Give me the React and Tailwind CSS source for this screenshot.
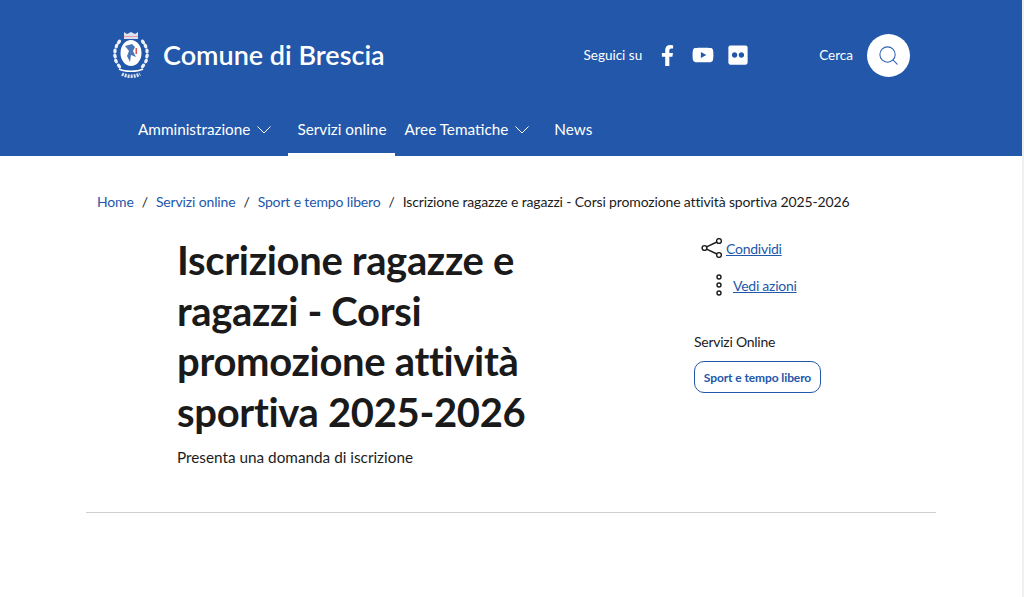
import React from 'react';
import { Search } from 'lucide-react';
import { FaFacebookF, FaYoutube, FaFlickr } from 'react-icons/fa';

// wreath leaves: x, y, rotation
const leaves = [
  [6, 11, 35], [3.5, 15, 20], [2, 20, 5], [2, 25, -10], [3, 30, -25], [6, 35, -40],
  [30, 11, -35], [32.5, 15, -20], [34, 20, -5], [34, 25, 10], [33, 30, 25], [30, 35, 40],
];

function Crest() {
  return (
    <svg width="36" height="47" viewBox="0 0 36 47" fill="none" className="mb-[2px]">
      {/* crown */}
      <path d="M11 1 L14 3 L18 1 L22 3 L25 1 V5 H11 Z" fill="#dbe3f0" />
      <rect x="11" y="5" width="14" height="1.2" fill="#ef9aa2" />
      <rect x="11" y="6.2" width="14" height="1.6" fill="#ffffff" />
      {/* wreath */}
      {leaves.map(([x, y, r]) => (
        <ellipse key={`${x}-${y}`} cx={x} cy={y} rx="1.7" ry="2.6" fill="#eef2f8" transform={`rotate(${r} ${x} ${y})`} />
      ))}
      {/* shield */}
      <ellipse cx="18" cy="22" rx="10.5" ry="13" fill="#ffffff" />
      <path d="M12 15 L19 13 L22 16 L20 20 L23 26 L18 24 L17 31 L14 25 L16 20 Z" fill="#4a76b8" />
      <rect x="22.5" y="17" width="1.5" height="6" fill="#d9525c" />
      {/* ribbon */}
      <path d="M6 38 C12 41 24 41 30 38" stroke="#ffffff" strokeWidth="1.6" />
      <path d="M9 43 C14 46 22 46 27 43" stroke="#dbe3f0" strokeWidth="3.5" strokeDasharray="2 1" />
    </svg>
  );
}

function Chevron() {
  return (
    <svg width="14" height="8" viewBox="0 0 14 8" fill="none" stroke="currentColor" strokeWidth="1">
      <path d="M0.5 0.5 L7 7 L13.5 0.5" />
    </svg>
  );
}

function NavItem({ label, chevron, active }) {
  return (
    <a className={`flex h-[46px] items-center gap-[7px] border-b-[3px] pb-[4px] pl-[9px] ${chevron ? 'pr-[16px]' : 'pr-[9px]'} ${active ? 'ml-[1px] border-white' : 'border-transparent'}`}>
      {label}
      {chevron && <Chevron />}
    </a>
  );
}

export default function App() {
  return (
    <div className="flex h-[597px] overflow-hidden bg-white font-['Lato',sans-serif]">
      <div className="min-w-0 flex-1">
        <header className="flex h-[156px] flex-col bg-[#2357aa] text-white">
          <div className="flex h-[110px] items-center pl-[113px] pr-[112px]">
            <Crest />
            <span className="ml-[14px] text-[27px] font-semibold">Comune di Brescia</span>
            <span className="ml-auto text-[13.5px]">Seguici su</span>
            <FaFacebookF className="ml-[15px]" size={21} />
            <FaYoutube className="ml-[14px]" size={22} />
            <FaFlickr className="ml-[12.5px]" size={22} />
            <span className="ml-[70.5px] text-[13.5px]">Cerca</span>
            <div className="ml-[14px] flex h-[43px] w-[43px] items-center justify-center rounded-full bg-white text-[#2f62b2]">
              <Search size={23} strokeWidth={1.1} />
            </div>
          </div>
          <nav className="flex pl-[129px] text-[15.3px]">
            <NavItem label="Amministrazione" chevron />
            <NavItem label="Servizi online" active />
            <NavItem label="Aree Tematiche" chevron />
            <NavItem label="News" />
          </nav>
        </header>

        <main className="px-[86px]">
          <div className="flex items-center pl-[11px] pt-[37px] text-[14px] leading-[18px] tracking-[-0.145px] text-[#1c1c1c]">
            <a className="text-[#2357aa]">Home</a>
            <span className="mx-[8px]">/</span>
            <a className="text-[#2357aa]">Servizi online</a>
            <span className="mx-[8px]">/</span>
            <a className="text-[#2357aa]">Sport e tempo libero</a>
            <span className="mx-[8px]">/</span>
            <span>Iscrizione ragazze e ragazzi - Corsi promozione attività sportiva 2025-2026</span>
          </div>

          <div className="flex border-b border-[#d0d0d0] pb-[43px]">
            <div className="ml-[91px] w-[431px] pt-[24px]">
              <h1 className="text-[40px] font-bold leading-[50.5px] tracking-[-0.33px] text-[#1a1a1a]">
                Iscrizione ragazze e ragazzi - Corsi promozione attività sportiva 2025-2026
              </h1>
              <p className="mt-[8px] text-[15.3px] leading-[24px] text-[#1c1c1c]">Presenta una domanda di iscrizione</p>
            </div>
            <div className="ml-[86px] pt-[25px] text-[14px] tracking-[-0.25px]">
              <div className="flex h-[24px] items-center pl-[6.5px]">
                <svg width="22" height="20" viewBox="0 0 22 20" fill="none" stroke="#1a1a1a" strokeWidth="1.4">
                  <circle cx="3.5" cy="10" r="2.4" />
                  <circle cx="18" cy="3" r="2.4" />
                  <circle cx="18" cy="17" r="2.4" />
                  <path d="M5.6 8.9 L15.9 4 M5.6 11.1 L15.9 16" />
                </svg>
                <a className="ml-[3.5px] text-[#2357aa] underline">Condividi</a>
              </div>
              <div className="mt-[13px] flex h-[24px] items-center pl-[20px]">
                <svg width="10" height="24" viewBox="0 0 10 24" fill="none" stroke="#1a1a1a" strokeWidth="1.4">
                  <circle cx="5" cy="4" r="2" />
                  <circle cx="5" cy="12" r="2" />
                  <circle cx="5" cy="20" r="2" />
                </svg>
                <a className="ml-[9px] text-[#2357aa] underline">Vedi azioni</a>
              </div>
              <p className="mt-[35px] leading-[20px] text-[#1c1c1c]">Servizi Online</p>
              <a className="mt-[9px] flex h-[32px] w-[127px] items-center justify-center rounded-[10px] border border-[#2357aa] pt-[1px] text-[12px] font-bold tracking-[-0.1px] text-[#2357aa]">
                Sport e tempo libero
              </a>
            </div>
          </div>
        </main>
      </div>
      <div className="w-[2px] shrink-0 bg-[#efefef]" />
    </div>
  );
}
